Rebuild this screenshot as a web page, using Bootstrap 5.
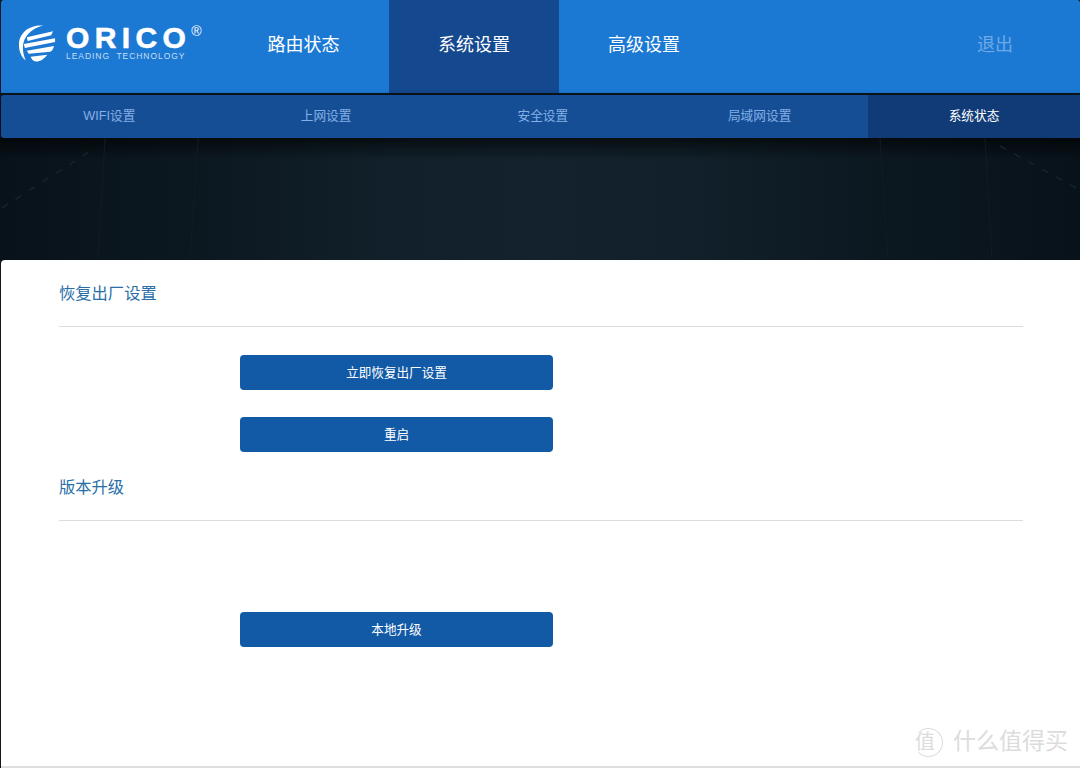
<!DOCTYPE html>
<html lang="zh-CN">
<head>
    <meta charset="UTF-8">
    <title>ORICO 系统设置</title>
    <link rel="stylesheet" href="https://cdn.jsdelivr.net/npm/bootstrap@5.3.0/dist/css/bootstrap.min.css">
    <style>
        html, body { height: 768px; overflow: hidden; }
        body {
            background: #0c171f;
            font-family: "Liberation Sans", "Noto Sans CJK SC", sans-serif;
        }

        /* top bar */
        .top-bar { height: 93px; background: #1c79d3; margin-left: 1px; border-radius: 3px 3px 0 0; }
        .logo-box { width: 217px; padding: 24px 0 0 17px; }
        .logo-globe { margin-right: 9px; }
        .logo-name {
            font-family: "Liberation Sans", sans-serif;
            font-weight: 700; font-size: 30px; line-height: 22px;
            letter-spacing: 5.4px; color: #fff; padding-top: 3px;
            -webkit-text-stroke: .6px #fff;
        }
        .logo-sub {
            font-size: 8.5px; line-height: 9px; color: #c5def5;
            letter-spacing: .95px; white-space: pre; margin-top: 3px;
        }
        .logo-reg { font-size: 14px; line-height: 14px; color: #fff; margin-top: 0; }
        .top-link {
            width: 170px; line-height: 91px; text-align: center;
            font-size: 18px; color: #fff; text-decoration: none;
        }
        .top-first { width: 171px; }
        .top-link.on { background: #15498f; }
        .top-exit { font-size: 18px; color: #6ea9e6; text-decoration: none; line-height: 91px; margin: 0 67px 0 auto; }

        /* second bar */
        .sub-bar {
            height: 43px; margin: 2px 0 0 1px; border-radius: 3px 0 0 3px;
            background: #164e95;
            box-shadow: 0 2px 6px rgba(0, 0, 0, .8);
            position: relative;
        }
        .sub-link {
            width: 216.75px; line-height: 43px; text-align: center;
            font-size: 12.7px; color: #84b0e6; text-decoration: none;
        }
        .sub-link.on { flex: 1 1 0; background: #113b76; color: #fff; }

        /* dark band */
        .band {
            height: 122px;
            background:
                linear-gradient(rgba(0, 0, 0, .6), rgba(0, 0, 0, 0) 22px),
                linear-gradient(90deg, #08121a 0%, #0c1820 18%, #11202a 36%, #13222c 50%, #11202a 64%, #0c1820 82%, #08121a 100%);
            position: relative;
        }
        .band-lines { position: absolute; inset: 0; }

        /* content */
        .panel {
            height: 508px; background: #fff; margin-left: 1px; border-radius: 4px 0 0 0;
            padding: 0 57px 0 58px; position: relative; border-bottom: 2px solid #dedede;
        }
        .sect-title { font-size: 16.3px; line-height: 22px; color: #2a6ea8; padding-top: 22px; height: 67px; border-bottom: 1px solid #dcdcdc; }
        .sect-next { padding-top: 24px; height: 69px; }
        .act-btn {
            display: block; width: 313px; height: 35px; margin-left: 181px; padding: 0;
            background: #125aa6; border: 0; border-radius: 4px;
            font-size: 12.6px; line-height: 37px; color: #fff;
        }
        .act-btn:hover { background: #125aa6; color: #fff; }
        .btn-gap-a { margin-top: 28px; }
        .btn-gap-b { margin-top: 27px; }
        .btn-gap-c { margin-top: 91px; }
        .watermark {
            position: absolute; right: 12px; bottom: 9px;
            font-size: 23px; line-height: 30px; color: #dcdcdc;
        }
        .wm-mark {
            display: inline-block; width: 29px; height: 29px; line-height: 27px;
            border: 1px solid #dcdcdc; border-left-color: transparent; border-radius: 50%;
            font-size: 20px; text-align: left; margin-right: 10px;
        }
    </style>
</head>
<body>
    <div class="top-bar d-flex">
        <div class="logo-box d-flex">
            <svg width="39" height="40" viewBox="0 0 40 40" class="logo-globe flex-shrink-0">
                <path d="M26 1C12 0 1 8 1 21c0 7 3 13 7 16-2-5-3-9-3-13C5 12 14 4 26 1z" fill="#fff"/>
                <path d="M9 13l27-6-2 4-24 6zM6 20l32-6v4L7 24zM9 27l28-5c-1 3-2 5-4 6l-22 2zM13 33l17-2c-3 4-7 7-11 7-3 0-5-2-6-5z" fill="#fff"/>
            </svg>
            <div>
                <div class="logo-name">ORICO</div>
                <div class="logo-sub">LEADING  TECHNOLOGY</div>
            </div>
            <div class="logo-reg">®</div>
        </div>
        <a class="top-link top-first" href="#">路由状态</a>
        <a class="top-link on" href="#">系统设置</a>
        <a class="top-link" href="#">高级设置</a>
        <a class="top-exit" href="#">退出</a>
    </div>

    <div class="sub-bar d-flex">
        <a class="sub-link" href="#">WIFI设置</a>
        <a class="sub-link" href="#">上网设置</a>
        <a class="sub-link" href="#">安全设置</a>
        <a class="sub-link" href="#">局域网设置</a>
        <a class="sub-link on" href="#">系统状态</a>
    </div>

    <div class="band">
        <svg class="band-lines" width="1080" height="122" viewBox="0 0 1080 122" fill="none">
            <path d="M2 70L95 10M1000 8L1080 52" stroke="#16242d" stroke-width="1.5" stroke-dasharray="7 9"/>
            <path d="M105 0L98 122M198 0L190 122M880 0L888 122M985 0L992 122" stroke="#101d25" stroke-width="1"/>
        </svg>
    </div>

    <div class="panel">
        <div class="sect-title">恢复出厂设置</div>
        <button type="button" class="btn act-btn btn-gap-a">立即恢复出厂设置</button>
        <button type="button" class="btn act-btn btn-gap-b">重启</button>
        <div class="sect-title sect-next">版本升级</div>
        <button type="button" class="btn act-btn btn-gap-c">本地升级</button>
        <div class="watermark"><span class="wm-mark">值</span>什么值得买</div>
    </div>

    <script src="https://cdn.jsdelivr.net/npm/bootstrap@5.3.0/dist/js/bootstrap.bundle.min.js"></script>
</body>
</html>
